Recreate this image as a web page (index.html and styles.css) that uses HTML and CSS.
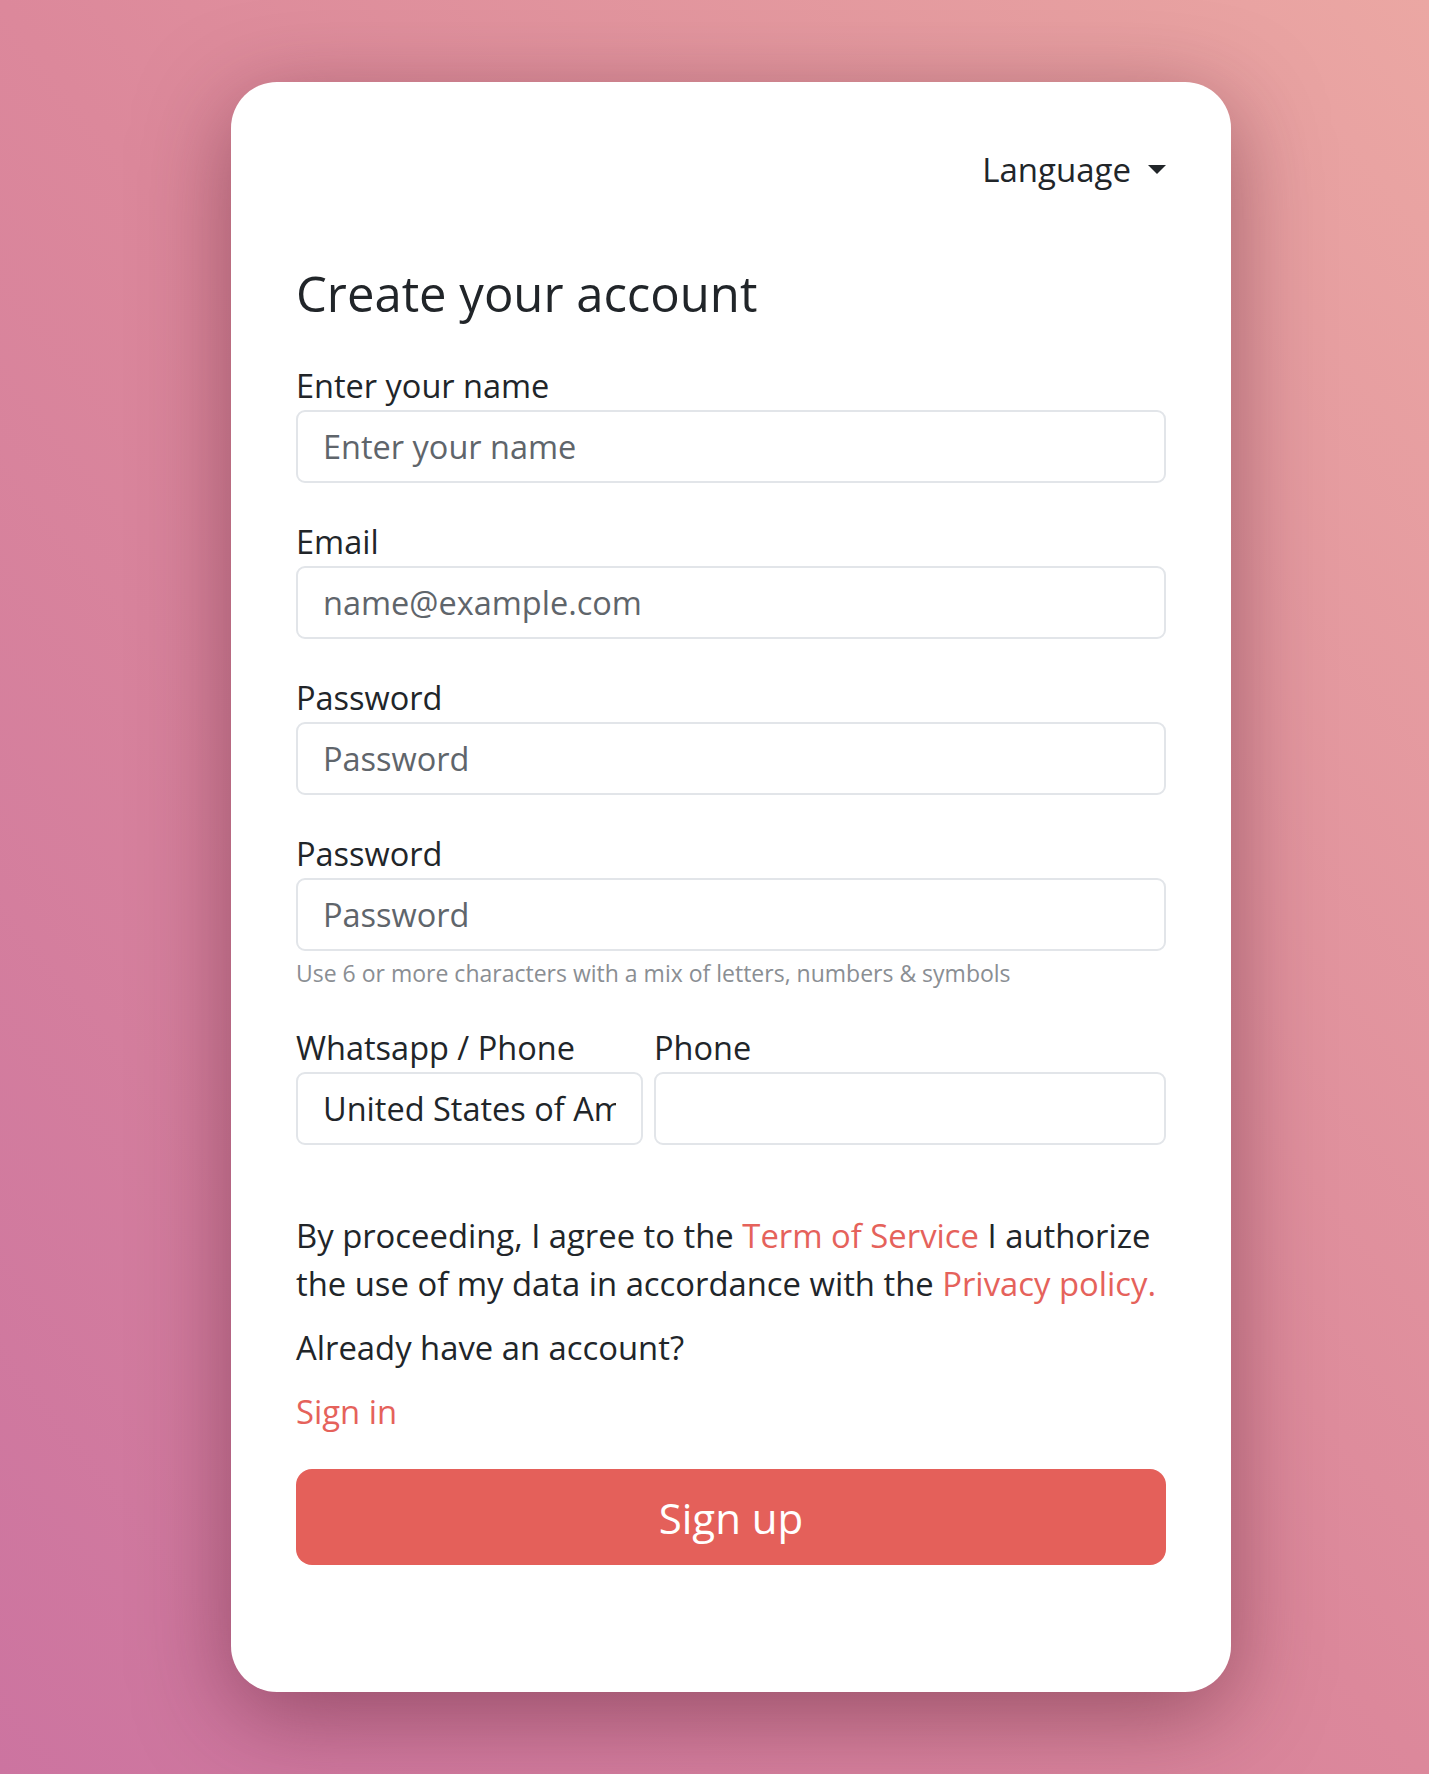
FILE: index.html
```html
<!DOCTYPE html>
<html lang="en">
<head>
<meta charset="utf-8">
<title>Create your account</title>
<link rel="stylesheet" href="styles.css">
</head>
<body>
<div class="page">
  <div class="card">
    <div class="topbar">
      <span class="lang">Language</span><span class="caret"></span>
    </div>
    <h2 class="title">Create your account</h2>
    <div class="group">
      <label class="label">Enter your name</label>
      <input class="field" type="text" placeholder="Enter your name">
    </div>
    <div class="group">
      <label class="label">Email</label>
      <input class="field" type="email" placeholder="name@example.com">
    </div>
    <div class="group">
      <label class="label">Password</label>
      <input class="field" type="password" placeholder="Password">
    </div>
    <div class="group">
      <label class="label">Password</label>
      <input class="field" type="password" placeholder="Password">
      <div class="hint">Use 6 or more characters with a mix of letters, numbers &amp; symbols</div>
    </div>
    <div class="phone-row">
      <div class="col">
        <label class="label">Whatsapp / Phone</label>
        <input class="field" type="text" value="United States of America" readonly>
      </div>
      <div class="col">
        <label class="label">Phone</label>
        <input class="field" type="tel">
      </div>
    </div>
    <p class="terms">By proceeding, I agree to the <a href="#" class="link">Term of Service</a> I authorize the use of my data in accordance with the <a href="#" class="link">Privacy policy.</a></p>
    <p class="text">Already have an account?</p>
    <p class="text"><a href="#" class="link">Sign in</a></p>
    <button class="btn" type="button">Sign up</button>
  </div>
</div>
</body>
</html>
```

FILE: styles.css
```css
html, body {
  margin: 0;
  padding: 0;
}
body {
  min-height: 1774px;
  background: linear-gradient(to top right, #cc74a0 0%, #dc889b 50%, #eba7a3 100%);
  font-family: "Open Sans", "Noto Sans", sans-serif;
  color: #212529;
}
.page {
  padding: 82px 0 83px 231px;
}
.card {
  box-sizing: border-box;
  width: 1000px;
  min-height: 1609px;
  background: #fff;
  border-radius: 46px;
  padding: 65px 65px 127px 65px;
  box-shadow: 0 22px 90px rgba(90, 30, 50, 0.5);
  display: flex;
  flex-direction: column;
}
.topbar {
  display: flex;
  justify-content: flex-end;
  align-items: center;
  height: 45px;
  font-size: 33px;
}
.caret {
  display: inline-block;
  margin-left: 17px;
  width: 0;
  height: 0;
  border-top: 9px solid #212529;
  border-left: 9px solid transparent;
  border-right: 9px solid transparent;
}
.title {
  margin: 71px 0 40px 0;
  font-size: 49px;
  font-weight: 400;
  line-height: 60px;
}
.group {
  display: flex;
  flex-direction: column;
  margin-bottom: 36px;
}
.label {
  font-size: 32.5px;
  line-height: 45px;
  margin-bottom: 2px;
}
.field {
  box-sizing: border-box;
  width: 100%;
  height: 73px;
  border: 2px solid #e2e5e9;
  border-radius: 9px;
  padding: 0 25px;
  font-family: "Open Sans", "Noto Sans", sans-serif;
  font-size: 32.5px;
  color: #212529;
  background: #fff;
  outline: none;
}
.field::placeholder {
  color: #5f656b;
}
.hint {
  margin-top: 7px;
  font-size: 23px;
  line-height: 31px;
  color: #8a8e93;
}
.phone-row {
  display: grid;
  grid-template-columns: 347px 1fr;
  column-gap: 11px;
  margin-bottom: 67px;
}
.col {
  display: flex;
  flex-direction: column;
}
.terms, .text {
  margin: 0 0 16px 0;
  font-size: 32.8px;
  line-height: 48px;
}
.link {
  color: #e5625b;
  text-decoration: none;
}
.btn {
  margin-top: 17px;
  height: 96px;
  width: 100%;
  border: none;
  border-radius: 16px;
  background: #e4605a;
  color: #fff;
  font-family: "Open Sans", "Noto Sans", sans-serif;
  font-size: 42px;
  cursor: pointer;
}
```
